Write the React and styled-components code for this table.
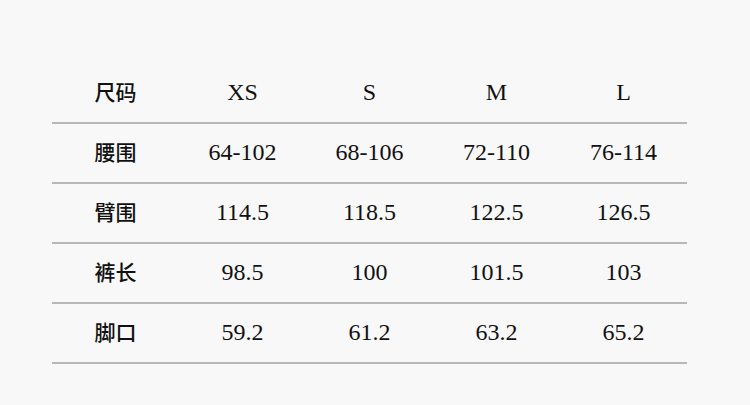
import styled, { createGlobalStyle } from "styled-components";

const GlobalStyle = createGlobalStyle`
  html, body {
    margin: 0;
    padding: 0;
    background: #f8f8f8;
  }
`;

const Page = styled.div`
  width: 750px;
  height: 405px;
  padding: 64px 0 0 52px;
  box-sizing: border-box;
  background: #f8f8f8;
  font-family: "Liberation Serif", "Noto Sans CJK SC", serif;
  color: #111;
`;

const Table = styled.div`
  width: 635px;
  display: flex;
  flex-direction: column;
`;

const Row = styled.div`
  display: grid;
  grid-template-columns: repeat(5, 1fr);
  height: 60px;
  border-bottom: 2px solid #b8b8b8;
  box-sizing: border-box;
`;

const Cell = styled.div`
  display: flex;
  align-items: center;
  justify-content: center;
  padding-bottom: ${(p) => (p.$cjk ? "5px" : "2px")};
  font-size: ${(p) => (p.$cjk ? "21px" : "24px")};
  font-weight: ${(p) => (p.$cjk ? 500 : 400)};
`;

const header = ["尺码", "XS", "S", "M", "L"];
const rows = [
  ["腰围", "64-102", "68-106", "72-110", "76-114"],
  ["臂围", "114.5", "118.5", "122.5", "126.5"],
  ["裤长", "98.5", "100", "101.5", "103"],
  ["脚口", "59.2", "61.2", "63.2", "65.2"],
];

export default function App() {
  return (
    <>
      <GlobalStyle />
      <Page>
        <Table>
          {[header, ...rows].map((r) => (
            <Row key={r[0]}>
              {r.map((c, i) => (
                <Cell key={i} $cjk={i === 0}>
                  {c}
                </Cell>
              ))}
            </Row>
          ))}
        </Table>
      </Page>
    </>
  );
}
